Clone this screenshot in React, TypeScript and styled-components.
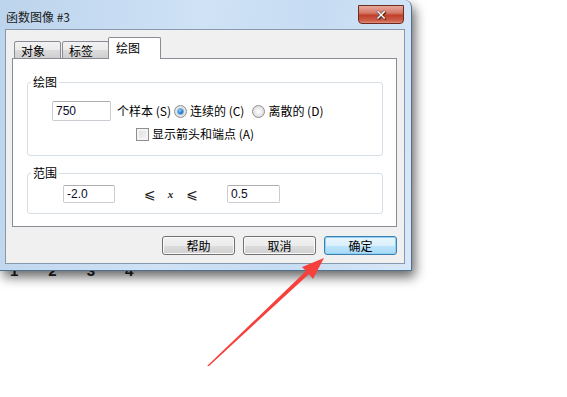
import styled, { createGlobalStyle } from "styled-components";

const GlobalStyle = createGlobalStyle`
  html, body {
    margin: 0;
    padding: 0;
    background: #ffffff;
    overflow: hidden;
  }
  body {
    width: 567px;
    height: 397px;
    position: relative;
    font-family: "Noto Sans CJK SC", "Liberation Sans", sans-serif;
    font-size: 12px;
    color: #000;
  }
`;

const cjk = `"Noto Sans CJK SC", "Liberation Sans", sans-serif`;

const Desktop = styled.div`
  position: relative;
  width: 567px;
  height: 397px;
`;

const AxisLabels = styled.div`
  position: absolute;
  left: 10px;
  top: 262px;
  display: flex;
  gap: 30px;
  font-family: "Liberation Sans", sans-serif;
  font-size: 15px;
  font-weight: bold;
  color: #222;
  span:last-child {
    font-size: 9px;
    font-style: italic;
    margin-left: -20px;
  }
`;

const Window = styled.div`
  position: absolute;
  left: 0;
  top: 0;
  width: 412px;
  height: 271px;
  box-sizing: border-box;
  padding: 0 6px 6px 5px;
  display: flex;
  flex-direction: column;
  background: linear-gradient(100deg, #bcd4ec 0%, #cfe2f6 45%, #c6dcf2 70%, #d8e8f8 100%);
  border-right: 1px solid #4f6f8f;
  border-bottom: 1px solid #4f6f8f;
  border-top-right-radius: 7px;
  box-shadow: 3px 6px 12px rgba(0, 0, 0, 0.6);
  z-index: 2;
`;

const TitleBar = styled.div`
  height: 33px;
  display: flex;
  align-items: flex-start;
  justify-content: space-between;
`;

const TitleText = styled.div`
  margin: 9px 0 0 1px;
  font-family: ${cjk};
  font-size: 12px;
  line-height: 16px;
  color: #1a1a1a;
`;

const CloseButton = styled.div`
  margin: 5px 1px 0 0;
  width: 46px;
  height: 19px;
  box-sizing: border-box;
  border: 1px solid #6b2c22;
  border-radius: 0 0 4px 4px;
  background: linear-gradient(180deg, #e8a89c 0%, #d5796a 40%, #c2402b 55%, #cc5d48 85%, #e0907c 100%);
  display: flex;
  align-items: center;
  justify-content: center;
  color: #fff;
  font-family: "DejaVu Sans", sans-serif;
  font-weight: bold;
  font-size: 14px;
  line-height: 14px;
  text-shadow: 0 0 1px #3a1a14, 0 0 1px #3a1a14, 1px 1px 0 #4a2018;
`;

const Client = styled.div`
  flex: 1;
  background: #f0f0f0;
  border: 1px solid #8799ad;
  display: flex;
  flex-direction: column;
  padding: 7px 7px 8px 6px;
`;

const TabRow = styled.div`
  display: flex;
  align-items: flex-end;
  padding-left: 2px;
  position: relative;
  z-index: 1;
  margin-bottom: -1px;
`;

const Tab = styled.div<{ $active?: boolean }>`
  box-sizing: border-box;
  height: ${(p) => (p.$active ? "22px" : "18px")};
  width: ${(p) => (p.$active ? "53px" : "47px")};
  padding: ${(p) => (p.$active ? "1px 0 0 7px" : "0 0 0 6px")};
  margin-right: 1px;
  margin-left: ${(p) => (p.$active ? "-2px" : "0")};
  border: 1px solid #898c95;
  border-bottom: ${(p) => (p.$active ? "none" : "1px solid #898c95")};
  border-radius: 2px 2px 0 0;
  background: ${(p) =>
    p.$active ? "#ffffff" : "linear-gradient(180deg, #f2f2f2 0%, #ebebeb 50%, #dcdcdc 51%, #cfcfcf 100%)"};
  font-family: ${cjk};
  font-size: 12px;
  line-height: 17px;
`;

const Panel = styled.div`
  width: 385px;
  height: 169px;
  box-sizing: border-box;
  background: #ffffff;
  border: 1px solid #898c95;
  padding: 16px 0 0 14px;
  display: flex;
  flex-direction: column;
  gap: 10px;
`;

const Group = styled.fieldset`
  margin: 0;
  width: 356px;
  box-sizing: border-box;
  border: 1px solid #d5dfe5;
  border-radius: 3px;
  padding: 0;
  min-width: 0;
`;

const Legend = styled.legend`
  margin-left: 3px;
  padding: 0 2px;
  font-family: ${cjk};
  font-size: 12px;
  line-height: 14px;
`;

const GroupBody = styled.div<{ $pad: string }>`
  padding: ${(p) => p.$pad};
`;

const Row = styled.div<{ $indent?: number; $top?: number }>`
  display: flex;
  align-items: center;
  margin-left: ${(p) => p.$indent ?? 0}px;
  margin-top: ${(p) => p.$top ?? 0}px;
`;

const TextInput = styled.div<{ $w: number; $h: number; $ml?: number }>`
  width: ${(p) => p.$w}px;
  height: ${(p) => p.$h}px;
  margin-left: ${(p) => p.$ml ?? 0}px;
  box-sizing: border-box;
  border: 1px solid #c9ccd2;
  border-top-color: #abadb3;
  border-radius: 2px;
  background: #fff;
  padding-left: 3px;
  display: flex;
  align-items: center;
  font-family: "Liberation Sans", sans-serif;
  font-size: 12px;
  color: #0a0a2a;
`;

const Label = styled.span<{ $ml?: number }>`
  margin-left: ${(p) => p.$ml ?? 0}px;
  font-family: ${cjk};
  font-size: 12px;
  line-height: 14px;
  white-space: nowrap;
`;

const Radio = styled.span<{ $checked?: boolean; $ml?: number }>`
  margin-left: ${(p) => p.$ml ?? 0}px;
  margin-right: 3px;
  width: 13px;
  height: 13px;
  box-sizing: border-box;
  border-radius: 50%;
  border: 1px solid #8f8f8f;
  background: radial-gradient(circle at 50% 50%, #ffffff 0%, #e4e4e4 60%, #cfcfcf 100%);
  display: flex;
  align-items: center;
  justify-content: center;
  &::after {
    content: "";
    display: ${(p) => (p.$checked ? "block" : "none")};
    width: 5px;
    height: 5px;
    border-radius: 50%;
    background: radial-gradient(circle at 40% 35%, #8fd3ff 0%, #1f7bd0 55%, #0a3c7a 100%);
    box-shadow: 0 0 0 1px #7ab3e0;
  }
`;

const Checkbox = styled.span`
  width: 13px;
  height: 13px;
  box-sizing: border-box;
  border: 1px solid #8f8f8f;
  background: linear-gradient(135deg, #dcdcdc 0%, #f6f6f6 100%);
  box-shadow: inset 0 0 0 2px #f4f4f4;
  margin-right: 3px;
`;

const MathSign = styled.span<{ $ml: number; $italic?: boolean }>`
  margin-left: ${(p) => p.$ml}px;
  font-family: ${(p) => (p.$italic ? `"Liberation Serif", serif` : `"DejaVu Sans", sans-serif`)};
  font-style: ${(p) => (p.$italic ? "italic" : "normal")};
  font-weight: ${(p) => (p.$italic ? "bold" : "normal")};
  font-size: ${(p) => (p.$italic ? "11px" : "14px")};
  color: #222;
`;

const ButtonRow = styled.div`
  margin-top: 9px;
  width: 385px;
  display: flex;
  justify-content: flex-end;
  gap: 8px;
`;

const Button = styled.div<{ $focus?: boolean }>`
  width: 73px;
  height: 19px;
  box-sizing: border-box;
  border: 1px solid ${(p) => (p.$focus ? "#3c7fb1" : "#707070")};
  border-radius: 3px;
  background: ${(p) =>
    p.$focus
      ? "linear-gradient(180deg, #eaf6fd 0%, #d9f0fc 50%, #bee6fd 51%, #a7d9f5 100%)"
      : "linear-gradient(180deg, #f2f2f2 0%, #ebebeb 50%, #dddddd 51%, #cfcfcf 100%)"};
  box-shadow: ${(p) => (p.$focus ? "inset 0 0 0 1px #8ed1f3" : "inset 0 0 0 1px #fbfbfb")};
  display: flex;
  align-items: center;
  justify-content: center;
  font-family: ${cjk};
  font-size: 12px;
`;

const Arrow = styled.svg`
  position: absolute;
  left: 0;
  top: 0;
  width: 567px;
  height: 397px;
  z-index: 3;
  pointer-events: none;
`;

export default function App() {
  return (
    <Desktop>
      <GlobalStyle />
      <AxisLabels>
        <span>1</span>
        <span>2</span>
        <span>3</span>
        <span>4</span>
        <span>x</span>
      </AxisLabels>
      <Window>
        <TitleBar>
          <TitleText>函数图像 #3</TitleText>
          <CloseButton>✕</CloseButton>
        </TitleBar>
        <Client>
          <TabRow>
            <Tab>对象</Tab>
            <Tab>标签</Tab>
            <Tab $active>绘图</Tab>
          </TabRow>
          <Panel>
            <Group>
              <Legend>绘图</Legend>
              <GroupBody $pad="12px 0 14px 24px">
                <Row>
                  <TextInput $w={59} $h={20}>750</TextInput>
                  <Label $ml={6}>个样本 (S)</Label>
                  <Radio $checked $ml={3} />
                  <Label>连续的 (C)</Label>
                  <Radio $ml={8} />
                  <Label>离散的 (D)</Label>
                </Row>
                <Row $indent={84} $top={6}>
                  <Checkbox />
                  <Label>显示箭头和端点 (A)</Label>
                </Row>
              </GroupBody>
            </Group>
            <Group>
              <Legend>范围</Legend>
              <GroupBody $pad="5px 0 10px 35px">
                <Row>
                  <TextInput $w={52} $h={18}>-2.0</TextInput>
                  <MathSign $ml={29}>⩽</MathSign>
                  <MathSign $ml={12} $italic>x</MathSign>
                  <MathSign $ml={13}>⩽</MathSign>
                  <TextInput $w={53} $h={18} $ml={29}>0.5</TextInput>
                </Row>
              </GroupBody>
            </Group>
          </Panel>
          <ButtonRow>
            <Button>帮助</Button>
            <Button>取消</Button>
            <Button $focus>确定</Button>
          </ButtonRow>
        </Client>
      </Window>
      <Arrow viewBox="0 0 567 397">
        <polygon
          points="207,366 209,366 309,274 313,279 324,258 302,267 306,271"
          fill="#f5403c"
        />
      </Arrow>
    </Desktop>
  );
}
